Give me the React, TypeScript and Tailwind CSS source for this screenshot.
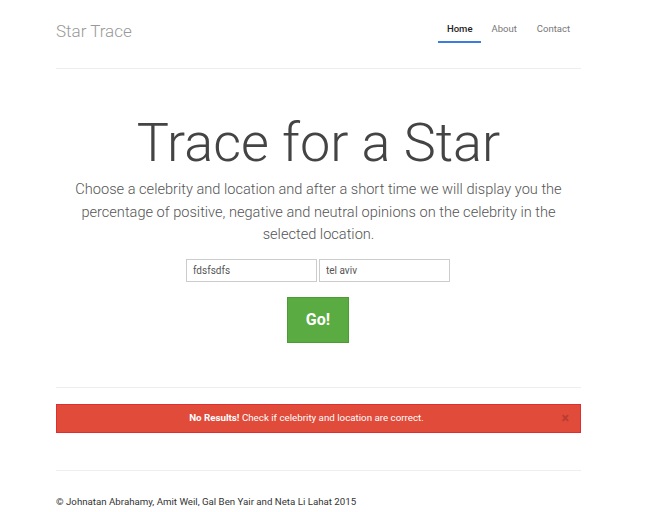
import React from "react";

export default function App() {
  return (
    <div className="min-h-[512px] bg-white" style={{ fontFamily: "Roboto, 'Liberation Sans', sans-serif" }}>
      <div className="ml-[56px] w-[525px]">
        <header className="flex items-center justify-between h-[69px] border-b border-[#eeeeee]">
          <div className="text-[17px] text-[#999999] font-light mt-[-5px]">Star Trace</div>
          <nav className="flex items-center mt-[-6px] mr-[1px] text-[9.5px]">
            <a className="px-[9px] pt-[3px] pb-[5px] text-[#222222] font-medium border-b-2 border-[#3b7ddd]">Home</a>
            <a className="px-[10px] pt-[3px] pb-[5px] text-[#777777] border-b-2 border-transparent">About</a>
            <a className="px-[10px] pt-[3px] pb-[5px] text-[#777777] border-b-2 border-transparent">Contact</a>
          </nav>
        </header>

        <section className="flex flex-col items-center border-b border-[#eeeeee] pb-[44px]">
          <h1 className="mt-[39px] text-[54px] leading-[70px] font-light text-[#444444]">Trace for a Star</h1>
          <p className="mt-[0px] text-center text-[14.6px] leading-[22.5px] font-light text-[#555555]">
            Choose a celebrity and location and after a short time we will display you the percentage of positive, negative and neutral opinions on the celebrity in the selected location.
          </p>
          <div className="flex gap-[2px] mt-[13px] mr-[1px]">
            <input
              readOnly
              value="fdsfsdfs"
              className="w-[131px] h-[23px] border border-[#cccccc] px-[6px] text-[10px] text-[#555555] outline-none"
            />
            <input
              readOnly
              value="tel aviv"
              className="w-[131px] h-[23px] border border-[#cccccc] px-[6px] text-[10px] text-[#555555] outline-none"
            />
          </div>
          <button className="mt-[15px] mr-[1px] w-[62px] h-[46px] bg-[#5aac42] border border-[#4e9a36] text-white font-bold text-[16px]">
            Go!
          </button>
        </section>

        <div className="mt-[16px] relative h-[29px] flex items-center justify-center pr-[24px] bg-[#e04b3a] border border-[#de2e34] text-white text-[9.75px]">
          <span>
            <b className="font-bold">No Results!</b> Check if celebrity and location are correct.
          </span>
          <span className="absolute right-[11px] top-[3px] text-[14px] font-bold text-[#a8362c] opacity-70">×</span>
        </div>

        <div className="mt-[37px] border-t border-[#eeeeee] pt-[24px] text-[9.7px] text-[#333333]">
          © Johnatan Abrahamy, Amit Weil, Gal Ben Yair and Neta Li Lahat 2015
        </div>
      </div>
    </div>
  );
}
